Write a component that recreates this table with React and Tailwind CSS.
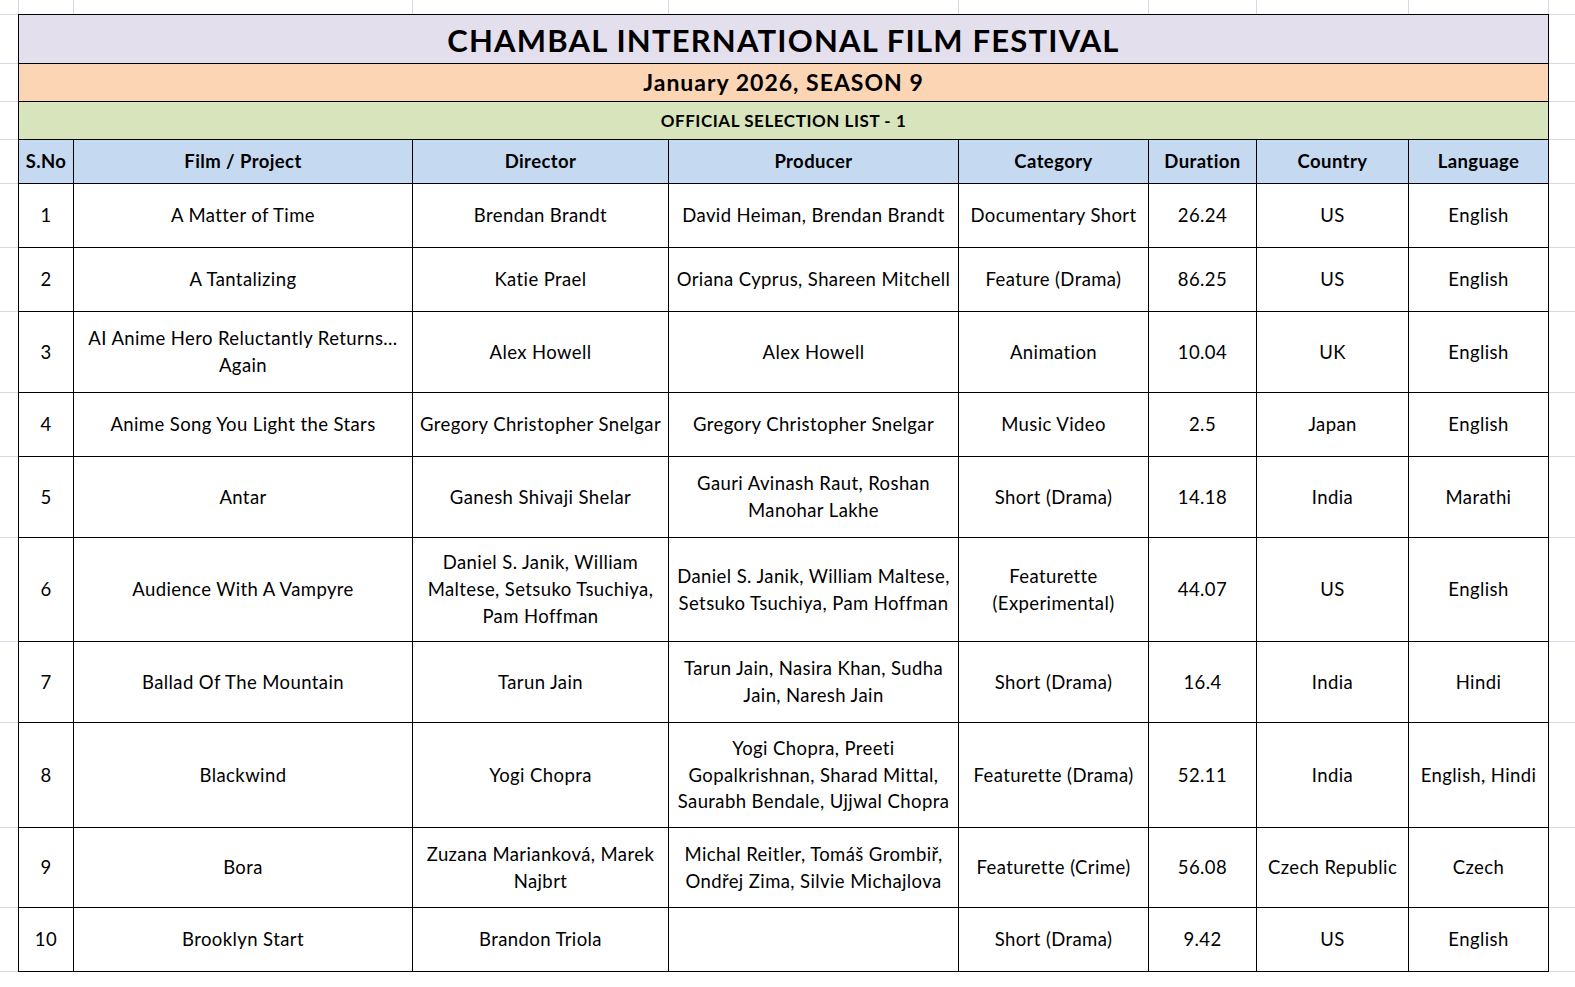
import React from "react";

// column widths measured between the black rules (incl. one rule each)
const colWidths = [55, 339, 256, 290, 190, 108, 152, 140];
// row heights (incl. one rule each)
const rowHeights = [49, 38, 38, 44, 64, 64, 81, 64, 81, 104, 81, 105, 80, 64];

const headers = ["S.No", "Film / Project", "Director", "Producer", "Category", "Duration", "Country", "Language"];

const films = [
  ["1", "A Matter of Time", "Brendan Brandt", "David Heiman, Brendan Brandt", "Documentary Short", "26.24", "US", "English"],
  ["2", "A Tantalizing", "Katie Prael", "Oriana Cyprus, Shareen Mitchell", "Feature (Drama)", "86.25", "US", "English"],
  ["3", "AI Anime Hero Reluctantly Returns…\nAgain", "Alex Howell", "Alex Howell", "Animation", "10.04", "UK", "English"],
  ["4", "Anime Song You Light the Stars", "Gregory Christopher Snelgar", "Gregory Christopher Snelgar", "Music Video", "2.5", "Japan", "English"],
  ["5", "Antar", "Ganesh Shivaji Shelar", "Gauri Avinash Raut, Roshan\nManohar Lakhe", "Short (Drama)", "14.18", "India", "Marathi"],
  ["6", "Audience With A Vampyre", "Daniel S. Janik, William\nMaltese, Setsuko Tsuchiya,\nPam Hoffman", "Daniel S. Janik, William Maltese,\nSetsuko Tsuchiya, Pam Hoffman", "Featurette\n(Experimental)", "44.07", "US", "English"],
  ["7", "Ballad Of The Mountain", "Tarun Jain", "Tarun Jain, Nasira Khan, Sudha\nJain, Naresh Jain", "Short (Drama)", "16.4", "India", "Hindi"],
  ["8", "Blackwind", "Yogi Chopra", "Yogi Chopra, Preeti\nGopalkrishnan, Sharad Mittal,\nSaurabh Bendale, Ujjwal Chopra", "Featurette (Drama)", "52.11", "India", "English, Hindi"],
  ["9", "Bora", "Zuzana Marianková, Marek\nNajbrt", "Michal Reitler, Tomáš Grombiř,\nOndřej Zima, Silvie Michajlova", "Featurette (Crime)", "56.08", "Czech Republic", "Czech"],
  ["10", "Brooklyn Start", "Brandon Triola", "", "Short (Drama)", "9.42", "US", "English"],
];

const Cell = ({ children, className = "" }) => (
  <div className={`bg-white flex items-center justify-center text-center whitespace-pre leading-[26.7px] ${className}`}>
    {children}
  </div>
);

// light Excel gridlines running down a side margin
const SideRules = ({ width }) => (
  <div className="flex flex-col" style={{ width }}>
    {rowHeights.map((h, i) => (
      <div key={i} className="border-t border-[#d4dae4]" style={{ height: h }} />
    ))}
    <div className="h-px bg-[#d4dae4]" />
  </div>
);

export default function App() {
  return (
    <div
      className="w-[1575px] h-[987px] bg-white text-black overflow-hidden"
      style={{ fontFamily: "Lato, 'Open Sans', sans-serif" }}
    >
      {/* top strip with column gridlines */}
      <div className="flex h-[14px]">
        <div className="w-[18px]" />
        {colWidths.map((w, i) => (
          <div key={i} className="border-l border-[#d4dae4]" style={{ width: w }} />
        ))}
        <div className="flex-1 border-l border-[#d4dae4]" />
      </div>

      <div className="flex">
        <SideRules width={18} />

        <div className="grid grid-cols-[54px_338px_255px_289px_189px_107px_151px_139px] grid-rows-[48px_37px_37px_43px_63px_63px_80px_63px_80px_103px_80px_104px_79px_63px] gap-px bg-black border border-black">
          <div className="col-span-8 bg-[#e4dfec] flex items-center justify-center text-[31px] tracking-[1.2px] font-bold pt-[2px]">
            CHAMBAL INTERNATIONAL FILM FESTIVAL
          </div>
          <div className="col-span-8 bg-[#fcd5b4] flex items-center justify-center text-[23px] tracking-[1px] font-bold">
            January 2026, SEASON 9
          </div>
          <div className="col-span-8 bg-[#d8e4bc] flex items-center justify-center text-[17px] tracking-[0.55px] font-bold">
            OFFICIAL SELECTION LIST - 1
          </div>
          {headers.map((h) => (
            <div key={h} className="bg-[#c5d9f1] flex items-center justify-center text-[18.5px] tracking-[0.4px] font-bold">
              {h}
            </div>
          ))}
          {films.map((row) =>
            row.map((v, j) => (
              <Cell key={row[0] + "-" + j} className="text-[18.5px] tracking-[0.4px]">
                {v}
              </Cell>
            ))
          )}
        </div>

        <div className="flex-1">
          <SideRules width="100%" />
        </div>
      </div>
    </div>
  );
}
